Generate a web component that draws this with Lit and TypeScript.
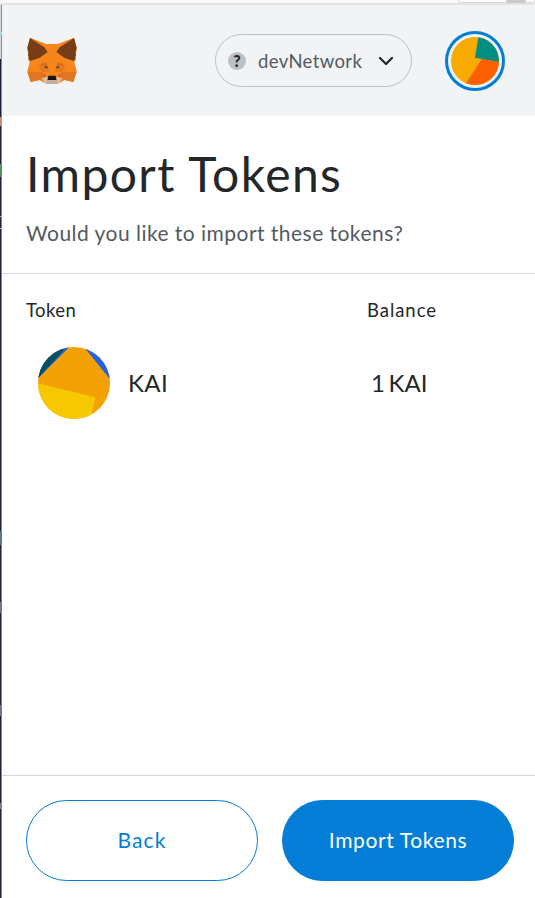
import { LitElement, html, css, svg } from "lit";
import { customElement, property } from "lit/decorators.js";

const FONT = css`"Lato", "Open Sans", sans-serif`;

@customElement("fox-logo")
class FoxLogo extends LitElement {
  static styles = css`
    :host { display: block; width: 50px; height: 46px; }
    svg { display: block; width: 100%; height: 100%; }
  `;
  render() {
    return html`<svg viewBox="0 0 150 138" aria-label="MetaMask">
      <path fill="#f6851b" d="M9 0 55 18H95L141 0 149 30 145 68 141 72 149 98 139 132 113 126 97 135 88 138H62L53 135 37 126 11 132 1 98 9 72 5 68 1 30Z"/>
      <path fill="#e27625" d="M9 0 55 18 61 40ZM141 0 95 18 89 40ZM1 101 43 101 49 121 37 126 11 132ZM149 101H107L101 121 113 126 139 132Z"/>
      <path fill="#f6851b" d="M9 70 37 61 61 43 67 101H3ZM141 70 113 61 89 43 83 101H147Z"/>
      <path fill="#f6851b" d="M9 0 55 18H95L141 0 88 43 83 112H67L62 43Z"/>
      <path fill="#763d16" d="M9 0 1 29 5 46 2 51 6 54 4 60 9 69 37 60 62 42 52 28ZM141 0 149 29 145 46 148 51 144 54 146 60 141 69 113 60 88 42 98 28Z"/>
      <path fill="#d96c1c" d="M36 80 58 73 64 92ZM114 80 92 73 86 92ZM43 101 60 115 49 121ZM107 101 90 115 101 121Z"/>
      <path fill="#e4761b" d="M36 80 43 101H67L64 92ZM114 80 107 101H83L86 92Z"/>
      <path fill="#34343d" d="M52 84 61 86 62 91 54 89ZM98 84 89 86 88 91 96 89Z"/>
      <path fill="#9d8b85" d="M50 84 55 84 54 89ZM100 84 95 84 96 89Z"/>
      <path fill="#d7c1b3" d="M45 120 61 116 60 127H90L89 116 105 120 97 134 88 138H62L53 134Z"/>
      <path fill="#c0ad9e" d="M60 127H90L94 135 88 138H62L56 135Z"/>
      <path fill="#161616" d="M64 113H86L88 126H62Z"/>
    </svg>`;
  }
}

@customElement("jazz-icon")
class JazzIcon extends LitElement {
  @property() kind = "account";
  static styles = css`
    :host { display: block; overflow: hidden; border-radius: 50%; }
    svg { display: block; width: 100%; height: 100%; }
  `;
  render() {
    const account = svg`
      <path fill="#f7ab00" d="M0 0H144V144H0Z"/>
      <path fill="#008f80" d="M82 0H144V75L72 62Z"/>
      <path fill="#fb6000" d="M92 66 144 74V144H40L46 137Z"/>`;
    const token = svg`
      <path fill="#f3a104" d="M0 0H216V216H0Z"/>
      <path fill="#2362e1" d="M0 0H94L0 94ZM138 0H216V97Z"/>
      <path fill="#06505f" d="M0 0H84L64 24 0 94Z"/>
      <path fill="#f5c800" d="M0 109 172 151 158 216H0Z"/>`;
    return this.kind === "account"
      ? html`<svg viewBox="0 0 144 144">${account}</svg>`
      : html`<svg viewBox="0 0 216 216">${token}</svg>`;
  }
}

@customElement("app-root")
class AppRoot extends LitElement {
  static styles = css`
    * { box-sizing: border-box; }
    :host { display: flex; flex-direction: column; height: 898px; width: 535px; overflow: hidden; background: #fff; color: #24272a; font-family: ${FONT}; }
    .browser { flex: none; height: 5px; background: #f7f8f9; border-bottom: 2px solid #e4e4e5; position: relative; }
    .tab { position: absolute; top: 0; left: 458px; width: 77px; height: 3px; background: #fff; border: 1px solid #dadbdc; border-top: 0; border-radius: 0 0 0 6px; }
    .dot { position: absolute; top: 0; left: 506px; width: 20px; height: 3px; background: #c8c9ca; border-radius: 0 0 10px 10px; }
    .window { flex: 1; min-height: 0; display: flex; }
    .edge { flex: none; width: 2px; background: linear-gradient(#d9dadd 54px, #1f1f35 54px); border-right: 1px solid #8b8b96; position: relative; }
    .mark { position: absolute; left: 0; width: 2px; }
    .m1 { top: 27px; height: 3px; background: #8fe3e8; }
    .m2 { top: 112px; height: 9px; background: #c58b79; }
    .m3 { top: 159px; height: 13px; background: #56915a; }
    .m4 { top: 211px; height: 1px; background: #9cb2df; }
    .m5 { top: 223px; height: 1px; background: #9ccfdb; }
    .m6 { top: 526px; height: 14px; background: #607984; }
    .m7 { top: 597px; height: 11px; background: #757584; }
    .m8 { top: 700px; height: 11px; background: #757584; }
    .m9 { top: 798px; height: 6px; background: #80808d; }
    .popup { flex: 1; min-width: 0; display: flex; flex-direction: column; }
    header { flex: none; height: 111px; background: #f2f3f5; display: flex; align-items: center; padding: 0 30px 0 25px; }
    .network { margin-left: auto; width: 197px; height: 53px; border: 1px solid #bbc0c5; border-radius: 27px; display: flex; align-items: center; padding: 0 16px 0 12px; color: #535a61; font-size: 18.5px; }
    .unknown { width: 18px; height: 18px; border-radius: 50%; background: #bbc0c5; color: #24272a; display: grid; place-items: center; font: 900 16px/18px ${FONT}; margin-right: 12px; }
    .name { letter-spacing: .38px; white-space: nowrap; }
    .chevron { margin-left: auto; width: 18px; height: 12px; }
    .account { margin-left: 33px; width: 60px; height: 60px; border: 3px solid #037dd6; border-radius: 50%; display: grid; place-items: center; }
    .account jazz-icon { width: 48px; height: 48px; }
    .intro { flex: none; height: 158px; border-bottom: 1px solid #d6d9dc; padding: 30px 24px 0; }
    h1 { margin: 0; font-size: 48px; line-height: 56px; font-weight: 400; letter-spacing: 1.42px; margin-bottom: 16px; white-space: nowrap; }
    .question { margin: 0; font-size: 21px; line-height: 29px; color: #535a61; letter-spacing: .47px; white-space: nowrap; }
    .tokens { flex: 1; padding: 23px 24px 0; }
    .row { display: grid; grid-template-columns: 341px 1fr; align-items: center; }
    .labels { height: 26px; font-size: 18.5px; letter-spacing: .4px; }
    .balance { letter-spacing: .95px; }
    .token { height: 72px; margin-top: 24px; font-size: 24px; }
    .asset { display: flex; align-items: center; gap: 18px; padding-left: 12px; }
    .asset jazz-icon { width: 72px; height: 72px; }
    .symbol, .amount { padding-bottom: 2px; }
    .symbol { letter-spacing: .4px; }
    .amount { padding-left: 4px; letter-spacing: 0; word-spacing: -2.5px; }
    footer { flex: none; height: 123px; border-top: 1px solid #d6d9dc; padding: 24px 21px 0 24px; display: flex; gap: 24px; }
    button { flex: 1; height: 81px; border-radius: 41px; border: 1px solid #037dd6; background: #fff; color: #037dd6; font: 400 21px ${FONT}; letter-spacing: 1.1px; padding: 0 0 2px; }
    .primary { background: #037dd6; color: #fff; letter-spacing: .62px; }
  `;
  render() {
    return html`
      <div class="browser"><span class="tab"></span><span class="dot"></span></div>
      <div class="window">
        <div class="edge">${[1, 2, 3, 4, 5, 6, 7, 8, 9].map((n) => html`<i class="mark m${n}"></i>`)}</div>
        <div class="popup">
          <header>
            <fox-logo></fox-logo>
            <div class="network">
              <span class="unknown">?</span><span class="name">devNetwork</span>
              <svg class="chevron" viewBox="0 0 18 12"><path d="M3 3 9 9 15 3" fill="none" stroke="#24272a" stroke-width="2.3" stroke-linecap="round" stroke-linejoin="round"/></svg>
            </div>
            <div class="account"><jazz-icon kind="account"></jazz-icon></div>
          </header>
          <section class="intro">
            <h1>Import Tokens</h1>
            <p class="question">Would you like to import these tokens?</p>
          </section>
          <section class="tokens">
            <div class="row labels"><span>Token</span><span class="balance">Balance</span></div>
            <div class="row token">
              <div class="asset"><jazz-icon kind="token"></jazz-icon><span class="symbol">KAI</span></div>
              <span class="amount">1 KAI</span>
            </div>
          </section>
          <footer><button>Back</button><button class="primary">Import Tokens</button></footer>
        </div>
      </div>`;
  }
}
